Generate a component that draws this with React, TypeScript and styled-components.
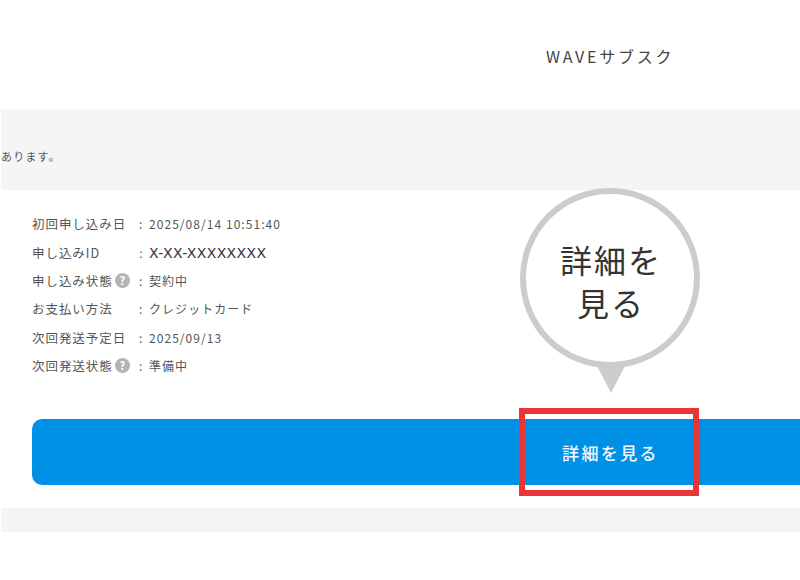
import React from 'react';
import styled, { createGlobalStyle } from 'styled-components';

const GlobalStyle = createGlobalStyle`
  html, body {
    margin: 0;
    padding: 0;
    background: #fff;
    overflow: hidden;
  }
  body {
    font-family: "Noto Sans CJK JP", "Noto Sans", sans-serif;
    color: #444;
  }
`;

const Page = styled.div`
  position: relative;
  width: 800px;
  height: 580px;
  overflow: hidden;
`;

const Header = styled.header`
  height: 109px;
  box-sizing: border-box;
  padding: 43px 0 0 546px;
`;

const Title = styled.h1`
  margin: 0;
  font-size: 16px;
  line-height: 26px;
  font-weight: 400;
  letter-spacing: 2.75px;
  color: #444;
  white-space: nowrap;
`;

const Notice = styled.div`
  height: 81px;
  margin-left: 1px;
  box-sizing: border-box;
  padding-top: 38px;
  background: #f5f5f5;
  font-size: 11px;
  line-height: 18px;
  letter-spacing: 1.2px;
  color: #555;
  white-space: nowrap;
`;

const Details = styled.dl`
  margin: 0;
  padding: 19.5px 0 0 32px;
  height: 229px;
  box-sizing: border-box;
`;

const Row = styled.div`
  display: flex;
  align-items: center;
  height: 28.4px;
  font-size: 12.5px;
  color: #555;
  letter-spacing: 0.95px;
`;

const Label = styled.dt`
  display: flex;
  align-items: center;
  width: 107px;
  white-space: nowrap;
`;

const HelpBadge = styled.span`
  display: inline-flex;
  align-items: center;
  justify-content: center;
  width: 15px;
  height: 15px;
  margin-left: 2px;
  border-radius: 50%;
  background: #b4b4b4;
  color: #fff;
  font-size: 11px;
  font-weight: 700;
  letter-spacing: 0;
  line-height: 1;
`;

const Value = styled.dd<{ $plain?: boolean }>`
  margin: 0;
  padding-top: ${(p) => (p.$plain ? '2px' : '0')};
  white-space: nowrap;
  font-family: ${(p) => (p.$plain ? '"DejaVu Sans", sans-serif' : 'inherit')};
  font-size: ${(p) => (p.$plain ? '14px' : '12px')};
  color: ${(p) => (p.$plain ? '#333' : '#555')};
  letter-spacing: ${(p) => (p.$plain ? '0.35px' : '1.05px')};
  &::before {
    content: ':';
    display: inline-block;
    width: 10px;
    font-size: 12px;
    color: #555;
  }
`;

const DetailButton = styled.a`
  display: flex;
  align-items: center;
  height: 66px;
  margin-left: 32px;
  margin-right: -40px;
  box-sizing: border-box;
  padding-left: 530px;
  border-radius: 10px;
  background: #0090e6;
  color: #f4faff;
  font-size: 17px;
  font-weight: 500;
  letter-spacing: 2.4px;
  white-space: nowrap;
`;

const Divider = styled.div`
  height: 24px;
  margin: 23px 0 0 1px;
  background: #f5f5f5;
`;

const Callout = styled.div`
  position: absolute;
  left: 520px;
  top: 188px;
  width: 180px;
  height: 180px;
  box-sizing: border-box;
  padding: 5px 0 0 2px;
  border: 6px solid #ccc;
  border-radius: 50%;
  background: #fff;
  display: flex;
  align-items: center;
  justify-content: center;
  text-align: center;
  font-size: 32px;
  line-height: 43px;
  letter-spacing: 2px;
  color: #333;
  &::after {
    content: '';
    position: absolute;
    left: 70px;
    top: 170px;
    border-style: solid;
    border-width: 29px 15px 0 15px;
    border-color: #ccc transparent transparent transparent;
  }
`;

const Highlight = styled.div`
  position: absolute;
  left: 519px;
  top: 408px;
  width: 180px;
  height: 88px;
  box-sizing: border-box;
  border: 6px solid #e93535;
`;

const rows = [
  { label: '初回申し込み日', value: '2025/08/14 10:51:40' },
  { label: '申し込みID', value: 'X-XX-XXXXXXXX', plain: true },
  { label: '申し込み状態', value: '契約中', help: true },
  { label: 'お支払い方法', value: 'クレジットカード' },
  { label: '次回発送予定日', value: '2025/09/13' },
  { label: '次回発送状態', value: '準備中', help: true },
];

export default function App() {
  return (
    <Page>
      <GlobalStyle />
      <Header>
        <Title>WAVEサブスク</Title>
      </Header>
      <Notice>あります。</Notice>
      <Details>
        {rows.map((row) => (
          <Row key={row.label}>
            <Label>
              {row.label}
              {row.help && <HelpBadge>?</HelpBadge>}
            </Label>
            <Value $plain={row.plain}>{row.value}</Value>
          </Row>
        ))}
      </Details>
      <DetailButton>詳細を見る</DetailButton>
      <Divider />
      <Callout>
        詳細を
        <br />
        見る
      </Callout>
      <Highlight />
    </Page>
  );
}
